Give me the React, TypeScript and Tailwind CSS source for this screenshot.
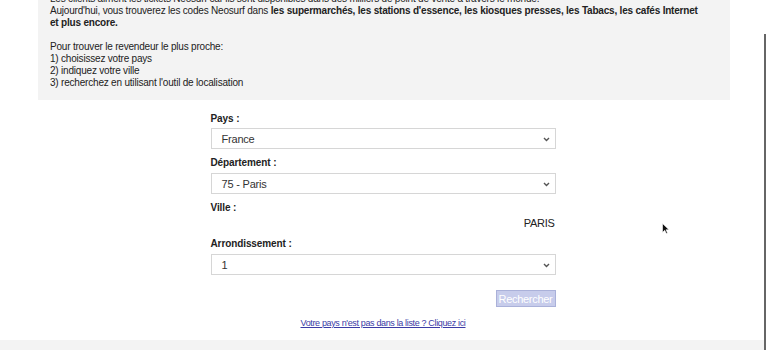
import React from 'react';

const FONT = { fontFamily: '"Liberation Sans", Arial, sans-serif' };

function Select({ value }: { value: string }) {
  return (
    <div className="relative h-[21px] border border-[#d6d6d6] bg-white">
      <span className="absolute left-[10px] top-[3px] text-[11px] leading-[14px] tracking-[-0.2px] text-[#333]">{value}</span>
      <svg className="absolute right-[5px] top-[8px]" width="7" height="5" viewBox="0 0 7 5">
        <path d="M1 1l2.5 2.5L6 1" fill="none" stroke="#555" strokeWidth="1.4" />
      </svg>
    </div>
  );
}

export default function App() {
  return (
    <div className="relative h-[350px] w-[766px] overflow-hidden bg-white text-[#222]" style={FONT}>
      {/* intro box */}
      <div className="ml-[38px] mr-[36px] mt-[-7px] h-[107px] bg-[#f3f3f3] pl-[12px] pr-[10px] text-[10px] leading-[12px] tracking-[-0.2px]">
        <p className="whitespace-nowrap">Les clients aiment les tickets Neosurf car ils sont disponibles dans des milliers de point de vente à travers le monde.</p>
        <p className="whitespace-nowrap">
          Aujourd'hui, vous trouverez les codes Neosurf dans{' '}
          <b>
            les supermarchés, les stations d'essence, les kiosques presses, les Tabacs, les cafés Internet
            <br />
            et plus encore.
          </b>
        </p>
        <p className="mt-[12px]">Pour trouver le revendeur le plus proche:</p>
        <p>1) choisissez votre pays</p>
        <p>2) indiquez votre ville</p>
        <p>3) recherchez en utilisant l'outil de localisation</p>
      </div>

      {/* form */}
      <div className="mx-auto mt-[12px] w-[345px] text-[10px] tracking-[-0.1px]">
        <div className="font-bold leading-[13px]">Pays :</div>
        <div className="mt-[3px]">
          <Select value="France" />
        </div>
        <div className="mt-[7px] font-bold leading-[13px]">Département :</div>
        <div className="mt-[4px]">
          <Select value="75 - Paris" />
        </div>
        <div className="mt-[7px] font-bold leading-[13px]">Ville :</div>
        <div className="mt-[2px] pr-[1px] text-right text-[11px] leading-[14px] tracking-[-0.3px]">PARIS</div>
        <div className="mt-[7px] font-bold leading-[13px]">Arrondissement :</div>
        <div className="mt-[4px]">
          <Select value="1" />
        </div>
        <div className="mt-[15px] flex justify-end">
          <button className="h-[17px] w-[60px] border border-[#aab1d9] bg-[#c7cceb] text-[11px] leading-[14px] tracking-[-0.3px] text-white">
            Rechercher
          </button>
        </div>
        <div className="mt-[10px] text-center text-[9px] leading-[12px] tracking-[-0.35px]">
          <a className="text-[#3b3ba6] underline">Votre pays n'est pas dans la liste ? Cliquez ici</a>
        </div>
      </div>

      {/* bottom strip */}
      <div className="absolute bottom-0 left-0 h-[10px] w-full bg-[#f3f3f3]" />
      {/* scrollbar */}
      <div className="absolute right-0 top-[34px] h-[316px] w-[2px] bg-[#666]" />
      {/* cursor */}
      <svg className="absolute left-[662px] top-[223px]" width="7" height="11" viewBox="0 0 7 11">
        <path d="M0.5 0.5v9l2.2-2.2 1.6 3.2 1.2-.6-1.5-3.1H7z" fill="#111" stroke="#fff" strokeWidth="0.6" />
      </svg>
    </div>
  );
}
